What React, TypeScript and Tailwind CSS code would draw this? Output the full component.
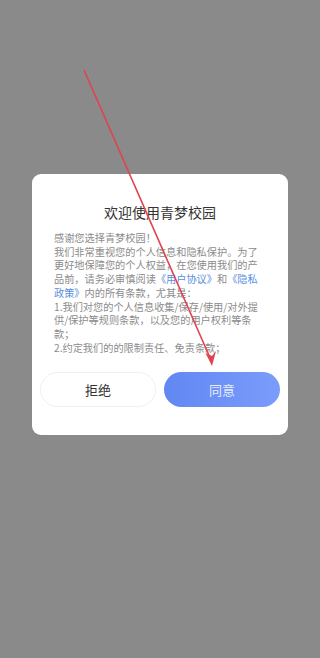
import React from "react";

const lines: React.ReactNode[] = [
  "感谢您选择青梦校园！",
  "我们非常重视您的个人信息和隐私保护。为了",
  "更好地保障您的个人权益，在您使用我们的产",
  <>
    品前，请务必审慎阅读<span className="text-[#5a8ee0]">《用户协议》</span>和<span className="text-[#5a8ee0]">《隐私</span>
  </>,
  <>
    <span className="text-[#5a8ee0]">政策》</span>内的所有条款，尤其是：
  </>,
  "1.我们对您的个人信息收集/保存/使用/对外提",
  "供/保护等规则条款，以及您的用户权利等条",
  "款；",
  "2.约定我们的的限制责任、免责条款；",
];

export default function App() {
  return (
    <div
      className="relative w-[320px] h-[658px] bg-[#8a8a8a] flex flex-col items-center overflow-hidden"
      style={{ fontFamily: '"Noto Sans CJK SC", "Noto Sans", sans-serif' }}
    >
      <div className="mt-[174px] w-[256px] bg-white rounded-[9px] flex flex-col">
        <div className="pt-[28px] h-[50px] text-center text-[14px] leading-[20px] text-[#333]">
          欢迎使用青梦校园
        </div>
        <div className="mt-[7px] px-[22px] h-[124px] overflow-hidden text-[10.2px] leading-[13.7px] text-[#8c8c8c]">
          {lines.map((l, i) => (
            <div key={i} className="whitespace-nowrap">
              {l}
            </div>
          ))}
        </div>
        <div className="mt-[17px] px-[8px] flex gap-[8px]">
          <button className="w-[116px] h-[35px] rounded-full border border-[#f0f0f0] bg-white text-[13px] text-[#333] flex items-center justify-center">
            拒绝
          </button>
          <button className="w-[116px] h-[35px] rounded-full bg-gradient-to-r from-[#6187f2] to-[#7b9cfc] text-[13px] text-[#e6ecff] flex items-center justify-center">
            同意
          </button>
        </div>
        <div className="h-[28px]" />
      </div>
      <svg className="absolute left-0 top-0" width="320" height="658" viewBox="0 0 320 658">
        <line x1="84" y1="70" x2="211" y2="360" stroke="#e0434d" strokeWidth="1.6" />
        <path d="M212 366 L205.5 353 L212 356 L216 351 Z" fill="#e0434d" />
      </svg>
    </div>
  );
}
